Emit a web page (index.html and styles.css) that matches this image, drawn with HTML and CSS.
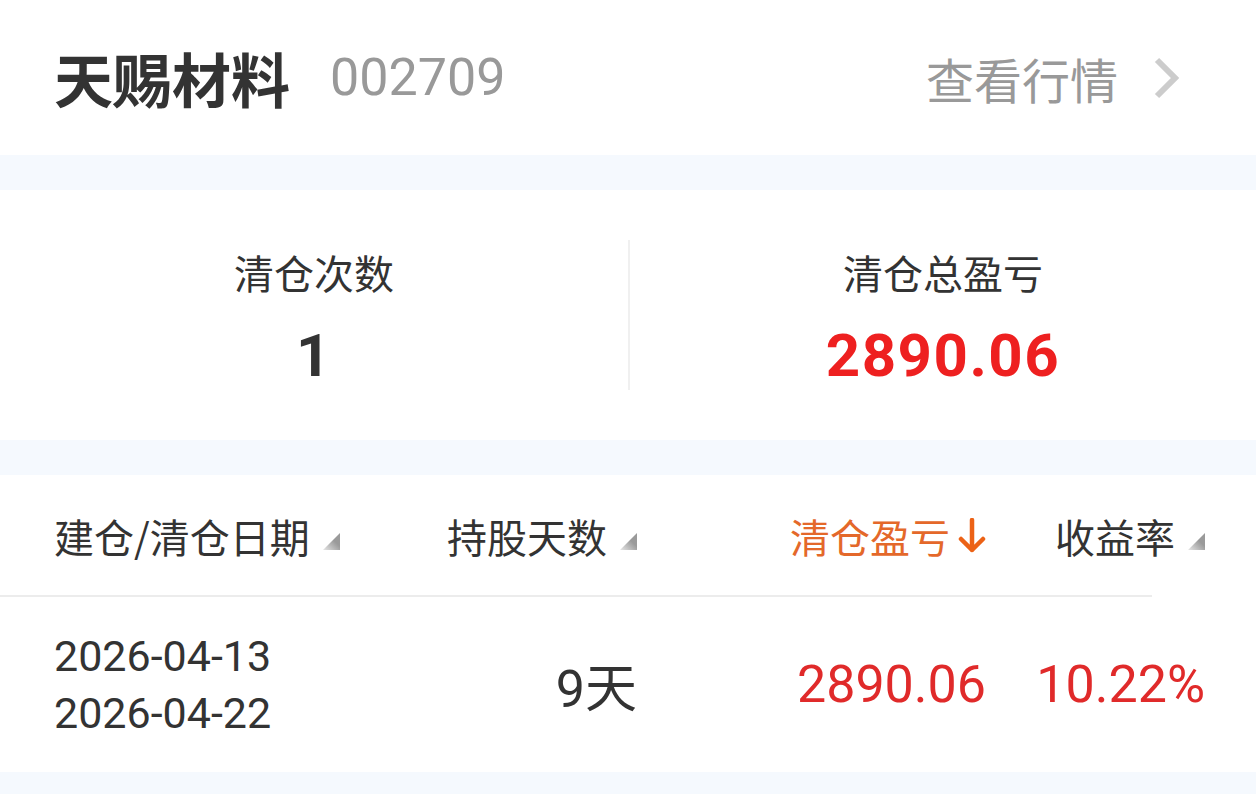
FILE: index.html
```html
<!DOCTYPE html>
<html lang="zh-CN">
<head>
    <meta charset="UTF-8">
    <meta name="viewport" content="width=device-width, initial-scale=1.0">
    <title>天赐材料 清仓记录</title>
    <link rel="stylesheet" href="styles.css">
</head>
<body>

    <div class="stock-head">
        <div class="stock-name">
            <h1>天赐材料</h1>
            <span class="stock-code">002709</span>
        </div>
        <a class="quote-link" href="#">
            查看行情
            <svg class="chevron" width="28" height="42" viewBox="0 0 28 42">
                <path d="M4 3 L22 21 L4 39" fill="none" stroke="#cccccc" stroke-width="6"/>
            </svg>
        </a>
    </div>

    <div class="gap"></div>

    <div class="summary">
        <div class="summary-item">
            <p class="summary-label">清仓次数</p>
            <p class="summary-value">1</p>
        </div>
        <div class="summary-item">
            <p class="summary-label">清仓总盈亏</p>
            <p class="summary-value up">2890.06</p>
        </div>
    </div>

    <div class="gap"></div>

    <div class="table">
        <div class="table-row table-head">
            <div class="cell cell-left">建仓/清仓日期<svg class="sort" width="17" height="17" viewBox="0 0 17 17"><defs><linearGradient id="g1" x1="0" y1="1" x2="1" y2="0"><stop offset="0" stop-color="#e6e6e6"/><stop offset="0.6" stop-color="#9a9a9a"/></linearGradient></defs><polygon points="17,0 17,17 0,17" fill="url(#g1)"/></svg></div>
            <div class="cell">持股天数<svg class="sort" width="17" height="17" viewBox="0 0 17 17"><polygon points="17,0 17,17 0,17" fill="url(#g1)"/></svg></div>
            <div class="cell active">清仓盈亏<svg class="arrow" width="28" height="36" viewBox="0 0 28 36"><path d="M14 2 L14 32 M3 21 L14 32 L25 21" fill="none" stroke="#ec6216" stroke-width="4.5" stroke-linecap="round" stroke-linejoin="round"/></svg></div>
            <div class="cell">收益率<svg class="sort" width="17" height="17" viewBox="0 0 17 17"><polygon points="17,0 17,17 0,17" fill="url(#g1)"/></svg></div>
        </div>
        <div class="table-row table-body">
            <div class="cell cell-left dates">
                <span>2026-04-13</span>
                <span>2026-04-22</span>
            </div>
            <div class="cell num">9天</div>
            <div class="cell num up-light">2890.06</div>
            <div class="cell num up-light">10.22%</div>
        </div>
    </div>

    <div class="gap gap-bottom"></div>

</body>
</html>
```

FILE: styles.css
```css
body {
    margin: 0;
    padding: 0;
    background: #fff;
    color: #333;
    font-family: "Noto Sans CJK SC", "Noto Sans", sans-serif;
}
p {
    margin: 0;
}
.stock-head {
    height: 155px;
    display: flex;
    align-items: center;
    justify-content: space-between;
    padding: 0 75px 0 54px;
}
.stock-name {
    display: flex;
    align-items: center;
}
h1 {
    margin: 0;
    font-size: 59px;
    font-weight: 700;
    color: #333;
    line-height: 1;
}
.stock-code {
    margin-left: 40px;
    font-family: Roboto, "Noto Sans", sans-serif;
    font-size: 52px;
    color: #999;
}
.quote-link {
    display: flex;
    align-items: center;
    font-size: 48px;
    color: #999;
    text-decoration: none;
}
.chevron {
    margin-left: 35px;
}
.gap {
    height: 35px;
    background: #f5f9fe;
}
.gap-bottom {
    height: 22px;
}
.summary {
    height: 250px;
    display: grid;
    grid-template-columns: 1fr 1fr;
    align-items: center;
}
.summary-item {
    text-align: center;
    padding: 2px 0;
}
.summary-item + .summary-item {
    border-left: 2px solid #f0f0f0;
}
.summary-label {
    font-size: 40px;
    color: #333;
    line-height: 60px;
}
.summary-value {
    margin-top: 22px;
    font-family: Roboto, "Noto Sans", sans-serif;
    font-size: 60px;
    font-weight: 700;
    letter-spacing: 1.5px;
    line-height: 64px;
    color: #333;
}
.summary-value.up {
    color: #ee2020;
}
.table-row {
    display: grid;
    grid-template-columns: minmax(0, 1fr) 300px 349px 219px;
    padding: 0 51px 0 54px;
    align-items: center;
}
.table-head {
    height: 122px;
    background: linear-gradient(#ececec, #ececec) left bottom / 1152px 2px no-repeat;
}
.table-body {
    height: 175px;
}
.cell {
    display: flex;
    justify-content: flex-end;
    align-items: center;
    font-size: 40px;
    color: #333;
    white-space: nowrap;
}
.cell-left {
    justify-content: flex-start;
}
.sort {
    flex: none;
    margin-left: 13px;
    margin-top: 10px;
}
.active {
    color: #e4682a;
}
.arrow {
    flex: none;
    margin-left: 8px;
}
.dates {
    flex-direction: column;
    align-items: flex-start;
    font-family: Roboto, "Noto Sans", sans-serif;
    font-size: 43px;
    line-height: 57px;
}
.num {
    font-family: Roboto, "Noto Sans CJK SC", sans-serif;
    font-size: 52px;
}
.up-light {
    color: #e02a2a;
}
```
